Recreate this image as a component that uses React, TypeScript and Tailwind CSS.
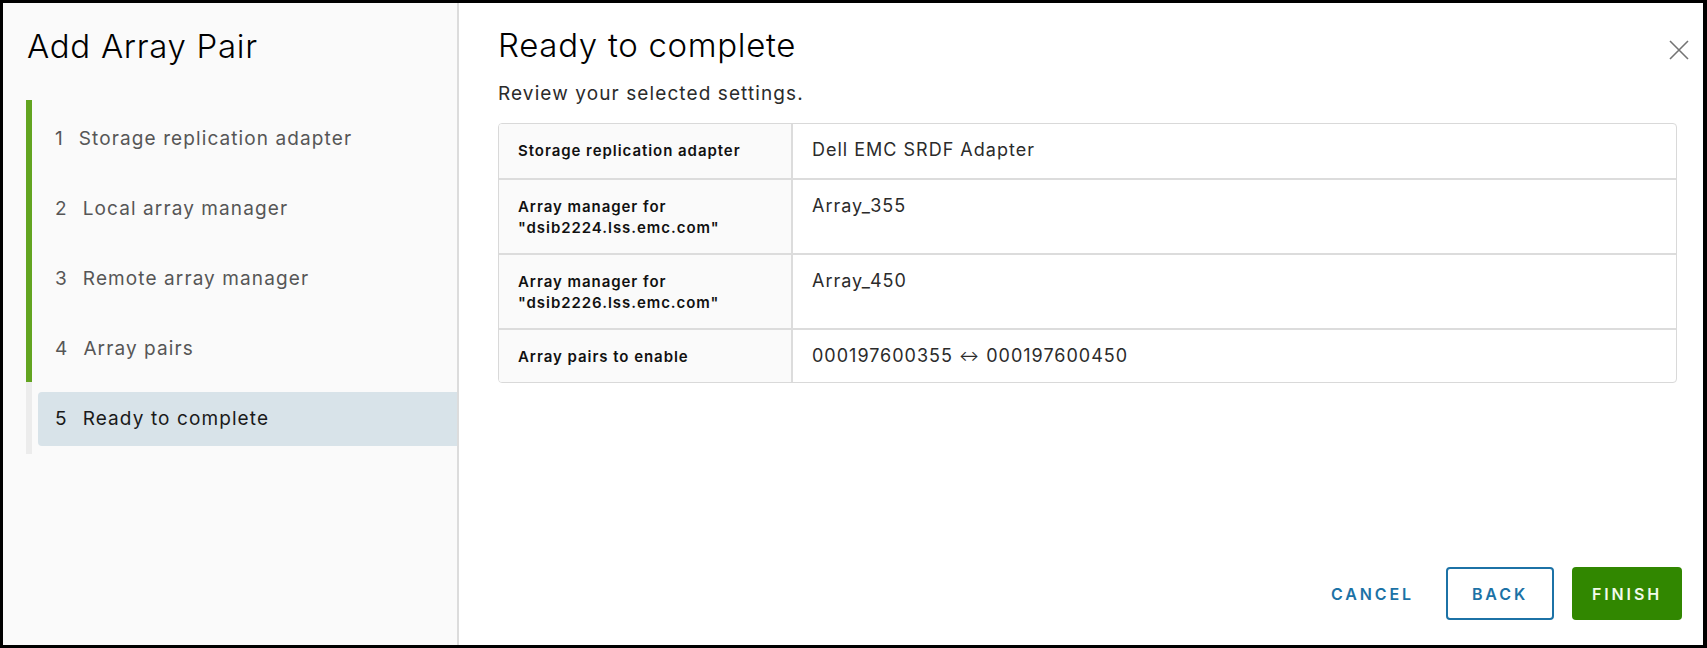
import React from "react";

const steps = [
  "Storage replication adapter",
  "Local array manager",
  "Remote array manager",
  "Array pairs",
  "Ready to complete",
];

const rows: { label: string[]; value: React.ReactNode; tall?: boolean }[] = [
  { label: ["Storage replication adapter"], value: "Dell EMC SRDF Adapter" },
  { label: ["Array manager for", '"dsib2224.lss.emc.com"'], value: "Array_355", tall: true },
  { label: ["Array manager for", '"dsib2226.lss.emc.com"'], value: "Array_450", tall: true },
  {
    label: ["Array pairs to enable"],
    value: (
      <>
        000197600355 <span className="text-[15px] align-[1px]">{"\u2194"}</span> 000197600450
      </>
    ),
  },
];

export default function App() {
  return (
    <div
      className="w-[1707px] h-[648px] border-black border-t-[3px] border-l-[3px] border-r-4 border-b-[3px] flex bg-white"
      style={{ fontFamily: "Inter, 'Noto Sans', sans-serif" }}
    >
      {/* Left wizard nav */}
      <div className="w-[456px] shrink-0 bg-[#fafafa] border-r-2 border-[#dcdcdc] flex flex-col">
        <div className="pl-[24px] pt-[23px] text-[33px] font-light text-[#000] leading-[40px] tracking-[0.7px]">
          Add Array Pair
        </div>
        <div className="flex mt-[34px] pl-[23px]">
          <div className="w-[6px] flex flex-col">
            <div className="h-[282px] bg-[#62a420]" />
            <div className="flex-1 bg-[#ececec]" />
          </div>
          <div className="flex-1 flex flex-col gap-[16px] pt-[12px] pb-[8px] pl-[6px]">
            {steps.map((s, i) => {
              const active = i === steps.length - 1;
              return (
                <div
                  key={s}
                  className={
                    "h-[54px] flex items-center pl-[17px] text-[19px] tracking-[1.1px] rounded-l-[4px] " +
                    (active ? "bg-[#d8e3e9] text-[#1a1a1a]" : "text-[#565656]")
                  }
                >
                  <span className="mr-[15px]">{i + 1}</span>
                  <span>{s}</span>
                </div>
              );
            })}
          </div>
        </div>
      </div>

      {/* Right content */}
      <div className="flex-1 flex flex-col pl-[39px] pr-[21px] pb-[25px]">
        <div className="flex items-start justify-between pt-[22px]">
          <div className="text-[33px] font-light text-[#000] leading-[40px] tracking-[0.7px]">Ready to complete</div>
          <button className="mt-[14px] mr-[-8px] text-[#747474]">
            <svg width="22" height="22" viewBox="0 0 22 22" fill="none" stroke="currentColor" strokeWidth="1.6">
              <path d="M2 2 L20 20 M20 2 L2 20" />
            </svg>
          </button>
        </div>
        <div className="mt-[17px] text-[19px] tracking-[1.1px] text-[#2b2b2b] leading-[24px]">
          Review your selected settings.
        </div>
        <div className="mt-[17px] mr-[5px] border border-[#d9d9d9] rounded-[4px] overflow-hidden">
          {rows.map((r, i) => (
            <div
              key={i}
              className={
                "flex " + (i > 0 ? "border-t-2 border-[#dcdcdc] " : "") + (r.tall ? "h-[75px]" : "h-[54px]")
              }
            >
              <div className="w-[294px] shrink-0 bg-[#fafafa] border-r-2 border-[#dcdcdc] pl-[19px] pt-[16px] text-[15px] font-semibold tracking-[0.95px] text-[#111] leading-[21px]">
                {r.label.map((l) => (
                  <div key={l}>{l}</div>
                ))}
              </div>
              <div className="flex-1 pl-[19px] pt-[14px] text-[18px] tracking-[1px] text-[#2b2b2b] leading-[24px]">
                {r.value}
              </div>
            </div>
          ))}
        </div>
        <div className="flex-1" />
        <div className="flex justify-end items-center gap-[18px]">
          <button className="h-[53px] px-[14px] text-[16px] font-semibold tracking-[0.18em] text-[#1c72a6]">
            CANCEL
          </button>
          <button className="h-[53px] w-[108px] border-2 border-[#1c72a6] rounded-[4px] text-[16px] font-semibold tracking-[0.18em] text-[#1c72a6]">
            BACK
          </button>
          <button className="h-[53px] w-[110px] bg-[#318700] rounded-[4px] text-[16px] font-semibold tracking-[0.18em] text-[#f2fbea]">
            FINISH
          </button>
        </div>
      </div>
    </div>
  );
}
